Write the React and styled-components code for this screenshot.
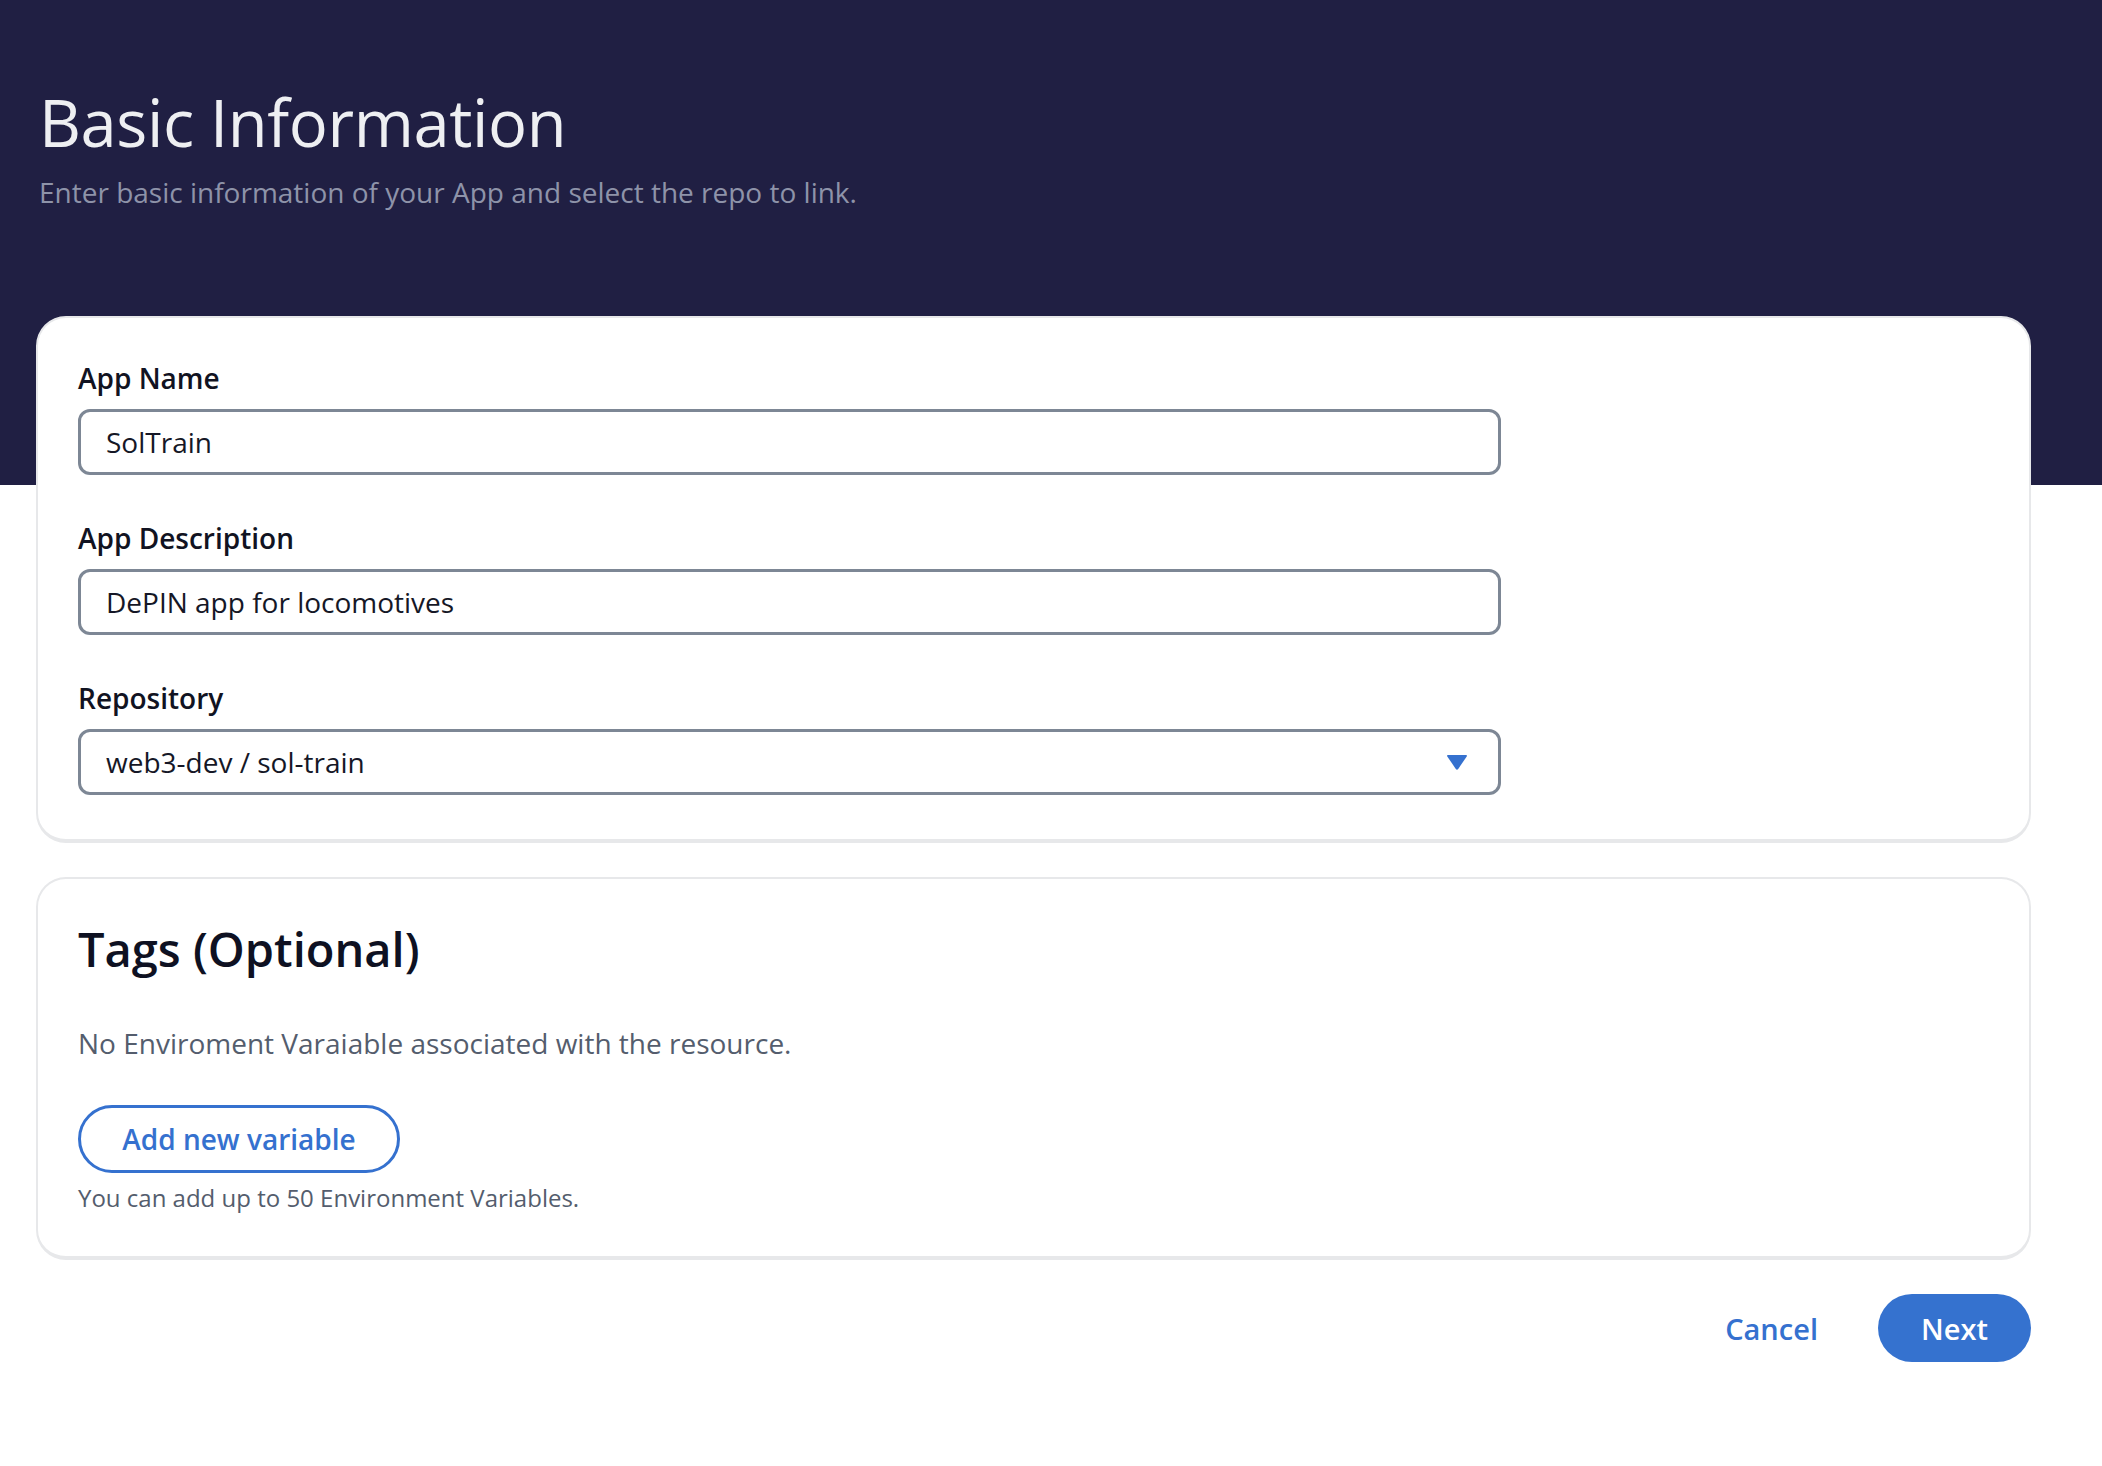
import React from "react";
import styled, { createGlobalStyle } from "styled-components";

const GlobalStyle = createGlobalStyle`
  html, body { margin: 0; padding: 0; background: #ffffff; }
  body { font-family: "Open Sans", "Noto Sans", sans-serif; -webkit-font-smoothing: antialiased; }
  * { box-sizing: border-box; }
`;

const Page = styled.div`
  min-height: 1466px;
  background: linear-gradient(to bottom, #201f43 0, #201f43 485px, #ffffff 485px);
  padding: 84px 71px 0 36px;
`;

const Heading = styled.header`
  padding-left: 3px;
  margin-bottom: 106px;
`;

const Title = styled.h1`
  margin: 0;
  font-size: 65px;
  line-height: 76px;
  font-weight: 400;
  color: #eeeff2;
  letter-spacing: -0.4px;
`;

const Subtitle = styled.p`
  margin: 14px 0 0;
  font-size: 28px;
  line-height: 36px;
  color: #8e93a9;
`;

const Card = styled.section`
  background: #ffffff;
  border: 2px solid #e7e8ea;
  border-bottom-width: 4px;
  border-radius: 30px;
  padding: ${(p) => p.$pad};
  display: flex;
  flex-direction: column;
  margin-bottom: 34px;
`;

const Field = styled.div`
  display: flex;
  flex-direction: column;
  gap: 13px;
  width: 1423px;
  & + & { margin-top: 45px; }
`;

const Label = styled.label`
  font-size: 28px;
  line-height: 36px;
  font-weight: 600;
  color: #111322;
`;

const InputBox = styled.div`
  height: 66px;
  border: 3px solid #7d8795;
  border-radius: 12px;
  display: flex;
  align-items: center;
  justify-content: space-between;
  padding: 0 30px 0 25px;
  font-size: 28px;
  color: #151726;
`;

const Caret = styled.svg`
  width: 22px;
  height: 18px;
  display: block;
`;

const SectionTitle = styled.h2`
  margin: 0;
  font-size: 47px;
  line-height: 64px;
  font-weight: 600;
  color: #0e1122;
`;

const Muted = styled.p`
  margin: ${(p) => p.$margin};
  font-size: ${(p) => p.$size};
  line-height: 1.35;
  color: #545d6d;
`;

const OutlineButton = styled.button`
  align-self: flex-start;
  height: 68px;
  width: 322px;
  border: 3px solid #3571cf;
  border-radius: 34px;
  background: #fff;
  color: #3571cf;
  font-family: inherit;
  font-size: 28px;
  font-weight: 600;
  cursor: pointer;
`;

const Footer = styled.div`
  display: flex;
  justify-content: flex-end;
  align-items: center;
  gap: 60px;
  margin-top: 4px;
`;

const TextButton = styled.button`
  border: none;
  background: none;
  padding: 0;
  color: #3571cf;
  font-family: inherit;
  font-size: 29px;
  font-weight: 600;
  cursor: pointer;
`;

const PrimaryButton = styled.button`
  height: 68px;
  width: 153px;
  border: none;
  border-radius: 34px;
  background: #3572cf;
  color: #ffffff;
  font-family: inherit;
  font-size: 29px;
  font-weight: 600;
  cursor: pointer;
`;

export default function App() {
  return (
    <>
      <GlobalStyle />
      <Page>
        <Heading>
          <Title>Basic Information</Title>
          <Subtitle>Enter basic information of your App and select the repo to link.</Subtitle>
        </Heading>

        <Card $pad="42px 42px 44px 40px">
          <Field>
            <Label>App Name</Label>
            <InputBox>SolTrain</InputBox>
          </Field>
          <Field>
            <Label>App Description</Label>
            <InputBox>DePIN app for locomotives</InputBox>
          </Field>
          <Field>
            <Label>Repository</Label>
            <InputBox>
              web3-dev / sol-train
              <Caret viewBox="0 0 22 18">
                <path d="M2 2 H20 Q21.5 2 20.7 3.4 L12.2 16 Q11 17.6 9.8 16 L1.3 3.4 Q0.5 2 2 2 Z" fill="#3571cf" />
              </Caret>
            </InputBox>
          </Field>
        </Card>

        <Card $pad="38px 42px 42px 40px">
          <SectionTitle>Tags (Optional)</SectionTitle>
          <Muted $size="28px" $margin="44px 0 42px">No Enviroment Varaiable associated with the resource.</Muted>
          <OutlineButton>Add new variable</OutlineButton>
          <Muted $size="24px" $margin="9px 0 0">You can add up to 50 Environment Variables.</Muted>
        </Card>

        <Footer>
          <TextButton>Cancel</TextButton>
          <PrimaryButton>Next</PrimaryButton>
        </Footer>
      </Page>
    </>
  );
}
